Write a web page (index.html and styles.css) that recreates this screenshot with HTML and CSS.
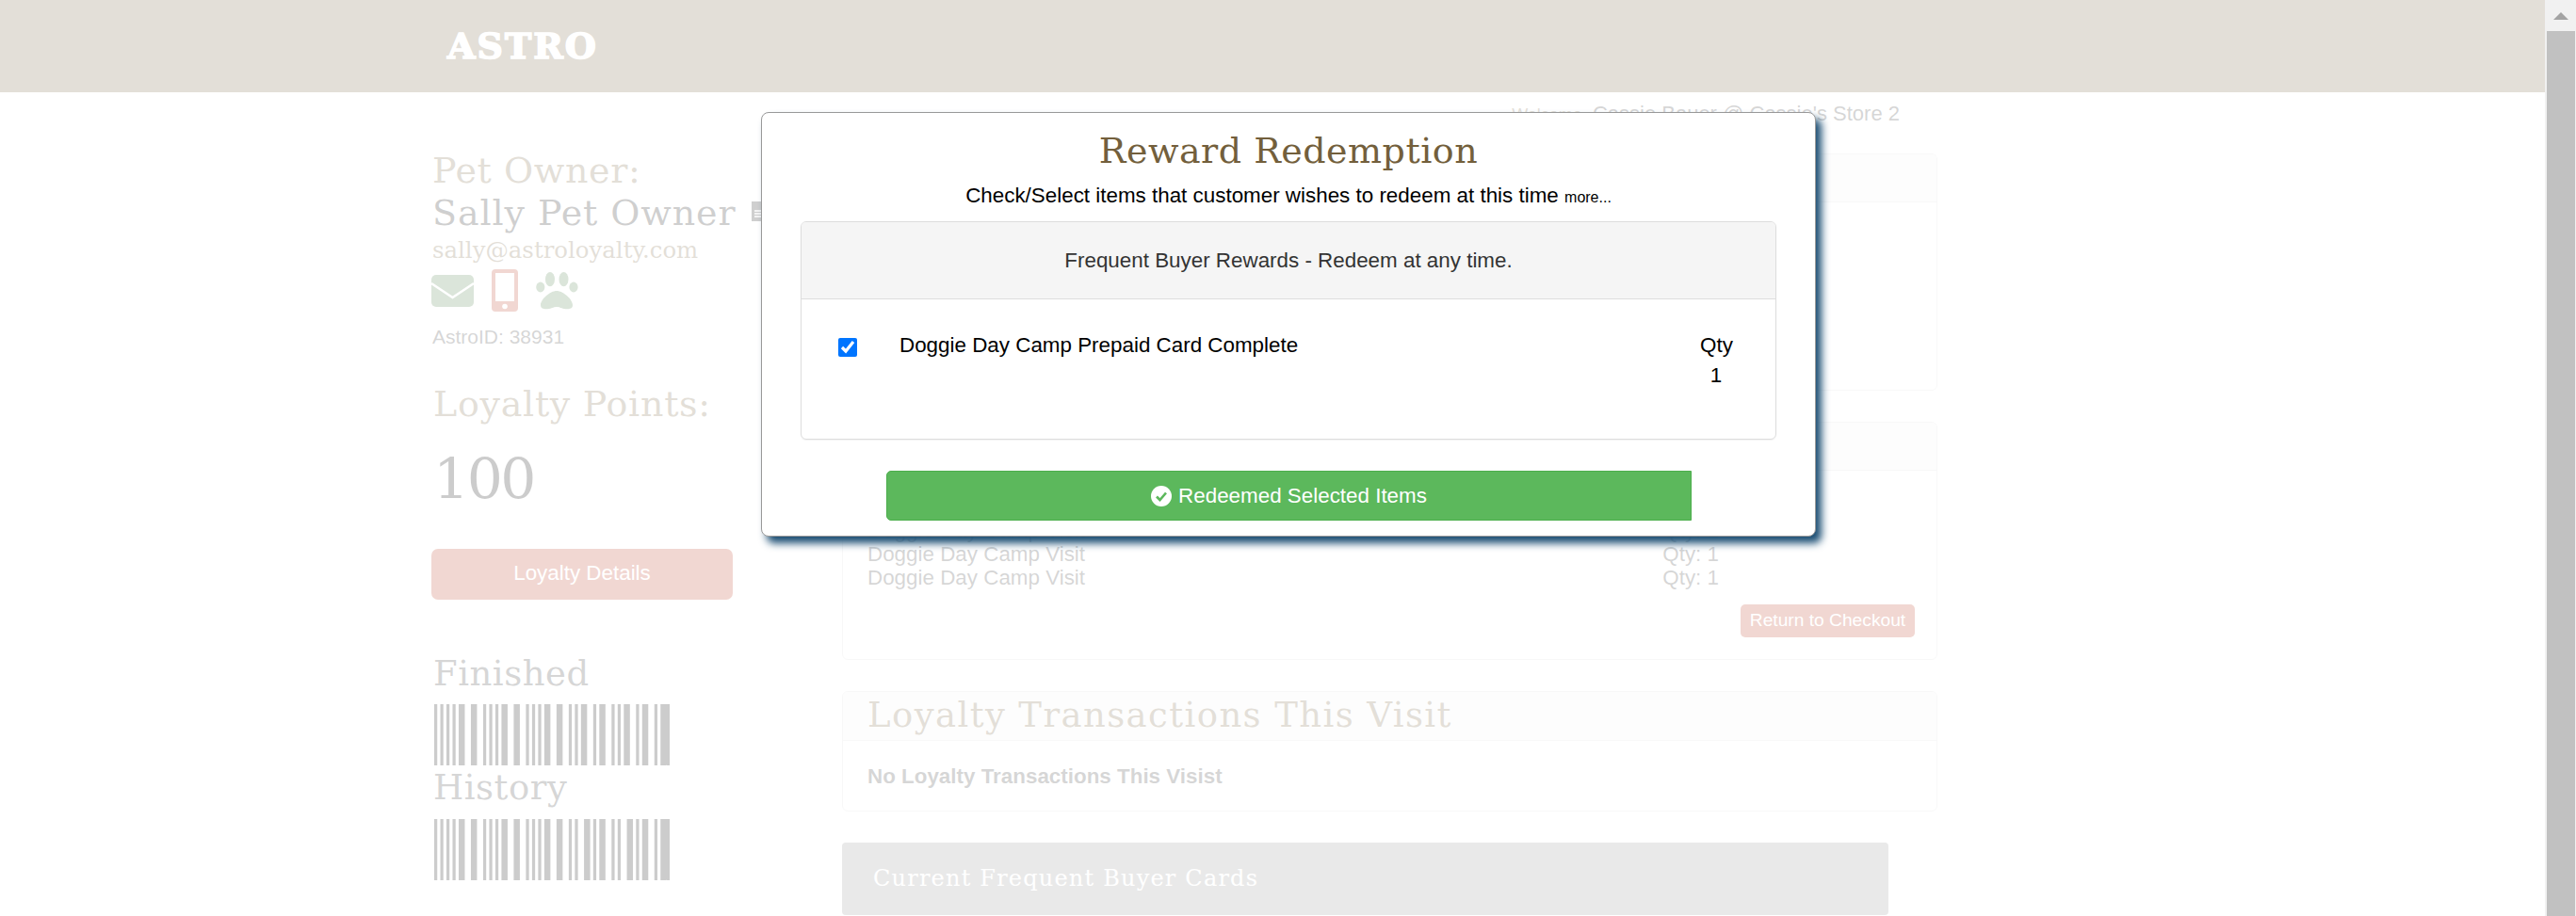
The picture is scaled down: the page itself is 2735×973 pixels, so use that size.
FILE: index.html
```html
<!DOCTYPE html>
<html lang="en">
<head>
    <meta charset="UTF-8">
    <meta name="viewport" content="width=device-width, initial-scale=1.0">
    <title>Reward Redemption</title>
    <link rel="stylesheet" href="styles.css">
</head>
<body>
    <div class="page">
        <header class="topbar">
            <div class="logo">ASTRO</div>
        </header>
        <div class="main">
            <div class="sidebar">
                <div class="owner-label">Pet Owner:</div>
                <div class="owner-row">
                    <span class="owner-name">Sally Pet Owner</span>
                    <svg class="doc-icon" viewBox="0 0 16 21"><path d="M0 0h10l6 6v15H0z" fill="#111"/><path d="M3 10h10M3 13h10M3 16h10" stroke="#fff" stroke-width="1.5"/></svg>
                </div>
                <div class="owner-email">sally@astroloyalty.com</div>
                <div class="contact-icons">
                    <svg class="icon-mail" viewBox="0 0 45 34"><rect width="45" height="34" rx="5" fill="#4b7d46"/><path d="M0 9l22.5 15L45 9" fill="none" stroke="#fff" stroke-width="2.5"/></svg>
                    <svg class="icon-phone" viewBox="0 0 28 45"><rect width="28" height="45" rx="4" fill="#b9371e"/><rect x="4" y="4" width="20" height="30" fill="#fff"/><circle cx="14" cy="39.5" r="2.8" fill="#fff"/></svg>
                    <svg class="icon-paw" viewBox="0 0 45 40" fill="#4b7d46"><ellipse cx="4.8" cy="16" rx="4.6" ry="5.4"/><ellipse cx="15" cy="7.7" rx="5" ry="7.6"/><ellipse cx="29.5" cy="7.7" rx="5" ry="7.6"/><ellipse cx="40" cy="16" rx="4.6" ry="5.4"/><path d="M22 20C29 20 39 29 39 35C39 40 33 39.5 30 39C26 38 25 37 22 37C19 37 18 38 14 39C11 39.5 5 40 5 35C5 29 15 20 22 20z"/></svg>
                </div>
                <div class="astro-id">AstroID: 38931</div>
                <div class="points-label">Loyalty Points:</div>
                <div class="points-value">100</div>
                <div class="details-btn">Loyalty Details</div>
                <div class="code-label finished">Finished</div>
                <svg class="barcode first" viewBox="0 0 77 60" preserveAspectRatio="none"><path d="M0 0h1v60h-1zM2 0h1v60h-1zM4 0h1v60h-1zM6 0h1v60h-1zM8 0h2v60h-2zM12 0h2v60h-2zM16 0h1v60h-1zM18 0h1v60h-1zM20 0h1v60h-1zM22 0h2v60h-2zM26 0h2v60h-2zM30 0h1v60h-1zM32 0h1v60h-1zM34 0h1v60h-1zM36 0h2v60h-2zM40 0h2v60h-2zM44 0h1v60h-1zM46 0h1v60h-1zM48 0h2v60h-2zM52 0h1v60h-1zM54 0h2v60h-2zM58 0h1v60h-1zM60 0h1v60h-1zM62 0h2v60h-2zM66 0h1v60h-1zM68 0h2v60h-2zM72 0h1v60h-1zM74 0h2v60h-2zM76 0h1v60h-1z"/></svg>
                <div class="code-label history">History</div>
                <svg class="barcode second" viewBox="0 0 77 60" preserveAspectRatio="none"><path d="M0 0h1v60h-1zM2 0h1v60h-1zM4 0h1v60h-1zM6 0h1v60h-1zM8 0h2v60h-2zM12 0h2v60h-2zM16 0h1v60h-1zM18 0h1v60h-1zM20 0h1v60h-1zM22 0h2v60h-2zM26 0h2v60h-2zM30 0h1v60h-1zM32 0h1v60h-1zM34 0h1v60h-1zM36 0h2v60h-2zM40 0h2v60h-2zM44 0h1v60h-1zM46 0h1v60h-1zM49 0h2v60h-2zM52 0h1v60h-1zM54 0h2v60h-2zM58 0h1v60h-1zM60 0h1v60h-1zM63 0h2v60h-2zM66 0h1v60h-1zM68 0h2v60h-2zM72 0h1v60h-1zM74 0h2v60h-2zM76 0h1v60h-1z"/></svg>
            </div>
            <div class="content">
                <div class="crumbs"><span class="welcome">Welcome</span><span>Cassie Bauer @ Cassie's Store 2</span></div>
                <div class="card card-top">
                    <div class="card-head"></div>
                </div>
                <div class="card card-visit">
                    <div class="card-head"></div>
                    <div class="visit-rows">
                        <div class="visit-row"><span>Doggie Day Camp Visit</span><span>Qty: 1</span></div>
                        <div class="visit-row"><span>Doggie Day Camp Visit</span><span>Qty: 1</span></div>
                        <div class="visit-row"><span>Doggie Day Camp Visit</span><span>Qty: 1</span></div>
                    </div>
                    <div class="return-btn">Return to Checkout</div>
                </div>
                <div class="card card-trans">
                    <div class="card-head trans-title">Loyalty Transactions This Visit</div>
                    <div class="trans-empty">No Loyalty Transactions This Visist</div>
                </div>
                <div class="cards-bar">Current Frequent Buyer Cards</div>
            </div>
        </div>
        <div class="veil"></div>
        <div class="modal">
            <h2 class="modal-title">Reward Redemption</h2>
            <p class="modal-sub">Check/Select items that customer wishes to redeem at this time <small>more...</small></p>
            <div class="panel">
                <div class="panel-head">Frequent Buyer Rewards - Redeem at any time.</div>
                <div class="panel-body">
                    <input class="pick" type="checkbox" checked>
                    <span class="item-name">Doggie Day Camp Prepaid Card Complete</span>
                    <div class="item-qty">
                        <div>Qty</div>
                        <div class="qty-num">1</div>
                    </div>
                </div>
            </div>
            <div class="redeem-btn">
                <svg class="check-icon" viewBox="0 0 22 22"><circle cx="11" cy="11" r="11" fill="#fff"/><path d="M6 11.5l3.5 3.5L16 7.5" fill="none" stroke="#5cb85c" stroke-width="2.6"/></svg>
                <span>Redeemed Selected Items</span>
            </div>
        </div>
    </div>
    <div class="scrollbar">
        <div class="scroll-up"><span class="arrow"></span></div>
        <div class="scroll-thumb"></div>
    </div>
</body>
</html>
```
FILE: styles.css
```css
html, body {
    margin: 0;
    padding: 0;
    height: 100%;
    overflow: hidden;
}
body {
    display: flex;
    font-family: "Liberation Sans", Arial, sans-serif;
    background: #fff;
    color: #333;
}
.page {
    position: relative;
    flex: 1;
    height: 973px;
    overflow: hidden;
}
.topbar {
    height: 98px;
    background: #735f3c;
    padding-left: 475px;
    box-sizing: border-box;
}
.logo {
    padding-top: 27px;
    font-family: "DejaVu Serif", serif;
    font-size: 38px;
    line-height: 44px;
    font-weight: bold;
    letter-spacing: 2px;
    color: #fff;
    -webkit-text-stroke: 1.6px #fff;
}
.main {
    display: flex;
    padding-left: 458px;
}

/* left column */
.sidebar {
    width: 436px;
    padding-top: 61px;
    font-family: "DejaVu Serif", serif;
}
.owner-label {
    font-size: 38px;
    line-height: 44px;
    letter-spacing: .6px;
    padding-left: 1px;
    color: #735f3c;
}
.owner-row {
    display: flex;
    align-items: center;
    margin-top: 1px;
    padding-left: 1px;
}
.owner-name {
    font-size: 38px;
    line-height: 44px;
    letter-spacing: .9px;
    color: #111;
}
.doc-icon {
    width: 16px;
    height: 21px;
    margin-left: 16px;
    margin-top: -4px;
}
.owner-email {
    font-size: 24.4px;
    line-height: 36px;
    padding-left: 1px;
    color: #735f3c;
}
.contact-icons {
    display: flex;
    align-items: center;
    height: 45px;
    margin-top: 2px;
}
.icon-mail {
    width: 45px;
    height: 34px;
}
.icon-phone {
    width: 28px;
    height: 45px;
    margin-left: 19px;
}
.icon-paw {
    width: 45px;
    height: 40px;
    margin-left: 19px;
}
.astro-id {
    font-family: "Liberation Sans", Arial, sans-serif;
    font-size: 21px;
    line-height: 24px;
    margin-top: 15px;
    padding-left: 1px;
    color: #333;
}
.points-label {
    font-size: 38px;
    line-height: 44px;
    letter-spacing: .7px;
    margin-top: 37px;
    padding-left: 2px;
    color: #735f3c;
}
.points-value {
    font-size: 60px;
    line-height: 70px;
    letter-spacing: -2.5px;
    margin-top: 23px;
    padding-left: 2px;
    color: #000;
}
.details-btn {
    width: 320px;
    height: 54px;
    margin-top: 39px;
    border-radius: 7px;
    background: #b9371e;
    color: #fff;
    font-family: "Liberation Sans", Arial, sans-serif;
    font-size: 22.4px;
    line-height: 52px;
    text-align: center;
}
.code-label {
    font-size: 37px;
    line-height: 40px;
    letter-spacing: .5px;
    padding-left: 2px;
    color: #333;
}
.finished {
    margin-top: 59px;
}
.history {
    margin-top: 4px;
}
.barcode {
    display: block;
    width: 250px;
    height: 65px;
    margin-left: 3px;
    fill: #000;
}
.barcode.first {
    margin-top: 12px;
}
.barcode.second {
    margin-top: 13px;
}

/* right column */
.content {
    width: 1163px;
}
.crumbs {
    display: flex;
    justify-content: flex-end;
    align-items: baseline;
    gap: 11px;
    height: 30px;
    margin-top: 8px;
    margin-right: 40px;
    font-size: 22px;
    line-height: 30px;
}
.welcome {
    font-size: 18px;
    color: #735f3c;
}
.card {
    box-sizing: border-box;
    border: 1px solid #ddd;
    border-radius: 6px;
    margin-bottom: 33px;
}
.card-head {
    height: 51px;
    box-sizing: border-box;
    background: #f5f5f5;
    border-bottom: 1px solid #ddd;
    border-radius: 5px 5px 0 0;
}
.card-top {
    height: 252px;
    margin-top: 27px;
}
.card-visit {
    height: 253px;
}
.visit-rows {
    padding: 51px 10px 0 26px;
}
.visit-row {
    display: flex;
    justify-content: space-between;
    width: 904px;
    font-size: 22.4px;
    line-height: 25px;
}
.return-btn {
    width: 185px;
    height: 35px;
    margin: 16px 23px 0 auto;
    border-radius: 5px;
    background: #b9371e;
    color: #fff;
    font-size: 19.2px;
    line-height: 33px;
    text-align: center;
}
.card-trans {
    height: 128px;
}
.trans-title {
    height: 52px;
    padding-left: 26px;
    font-family: "DejaVu Serif", serif;
    font-size: 37px;
    line-height: 49px;
    letter-spacing: 1.4px;
    color: #735f3c;
}
.trans-empty {
    padding: 25px 0 0 26px;
    font-size: 22.4px;
    line-height: 25px;
    font-weight: bold;
}
.cards-bar {
    box-sizing: border-box;
    width: 1111px;
    height: 77px;
    padding-left: 33px;
    border-radius: 4px;
    background: #919191;
    color: #fff;
    font-family: "DejaVu Serif", serif;
    font-size: 24px;
    line-height: 76px;
    letter-spacing: 1.2px;
}

/* white veil over the page while the dialog is open */
.veil {
    position: absolute;
    top: 0;
    right: 0;
    bottom: 0;
    left: 0;
    background: rgba(255, 255, 255, 0.8);
}
.modal {
    position: absolute;
    left: 808px;
    top: 119px;
    width: 1120px;
    height: 451px;
    box-sizing: border-box;
    padding: 18px 41px 0;
    border: 1px solid #999;
    border-radius: 8px;
    background: #fff;
    box-shadow: 6px 7px 8px #1a4d73;
    color: #000;
}
.modal-title {
    margin: 0;
    font-family: "DejaVu Serif", serif;
    font-size: 38px;
    line-height: 44px;
    font-weight: normal;
    letter-spacing: .5px;
    text-align: center;
    color: #735f3c;
}
.modal-sub {
    margin: 13px 0 14px;
    height: 26px;
    font-size: 22.4px;
    line-height: 26px;
    text-align: center;
}
.modal-sub small {
    font-size: 16px;
    line-height: 1;
}
.panel {
    height: 232px;
    box-sizing: border-box;
    border: 1px solid #ddd;
    border-radius: 6px;
    box-shadow: 0 1px 1px rgba(0, 0, 0, .05);
}
.panel-head {
    height: 82px;
    box-sizing: border-box;
    background: #f5f5f5;
    border-bottom: 1px solid #ddd;
    border-radius: 5px 5px 0 0;
    font-size: 22.4px;
    line-height: 81px;
    text-align: center;
    color: #333;
}
.panel-body {
    display: flex;
    align-items: flex-start;
    padding: 36px 0 0 39px;
    font-size: 22.4px;
    line-height: 26px;
}
.pick {
    width: 20px;
    height: 20px;
    margin: 5px 45px 0 0;
}
.item-name {
    width: 850px;
}
.item-qty {
    width: 34px;
    text-align: center;
}
.qty-num {
    margin-top: 6px;
}
.redeem-btn {
    display: flex;
    align-items: center;
    justify-content: center;
    gap: 7px;
    box-sizing: border-box;
    width: 855px;
    height: 53px;
    margin: 33px 0 0 91px;
    border: 1px solid #4cae4c;
    border-radius: 5px 0 0 5px;
    background: #5cb85c;
    color: #fff;
    font-size: 22.4px;
}
.check-icon {
    width: 22px;
    height: 22px;
}

/* browser scrollbar */
.scrollbar {
    display: flex;
    flex-direction: column;
    width: 33px;
    height: 973px;
    background: #f1f1f1;
}
.scroll-up {
    display: flex;
    justify-content: center;
    height: 33px;
    box-sizing: border-box;
    padding-top: 13px;
}
.arrow {
    width: 0;
    height: 0;
    border-left: 8px solid transparent;
    border-right: 8px solid transparent;
    border-bottom: 8px solid #a3a3a3;
}
.scroll-thumb {
    flex: 1;
    margin: 0 1px 0 2px;
    background: #c1c1c1;
}
```
